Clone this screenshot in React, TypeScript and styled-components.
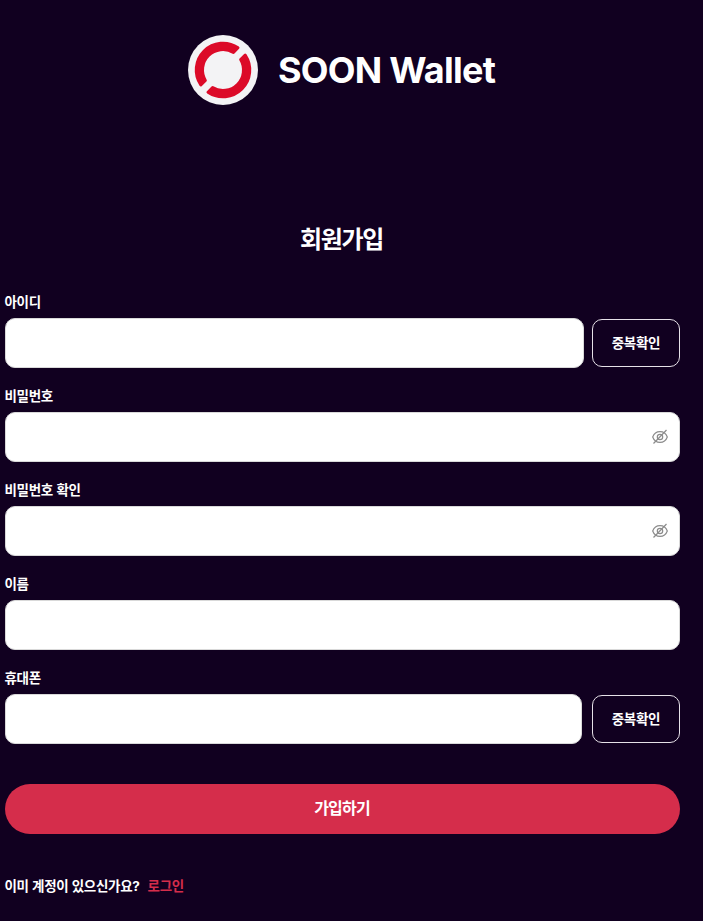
import React from "react";
import styled, { createGlobalStyle } from "styled-components";

const Global = createGlobalStyle`
  * { box-sizing: border-box; }
  body {
    margin: 0;
    background: #110020;
    color: #fff;
    font-family: Inter, "Noto Sans CJK KR", sans-serif;
  }
`;

const Page = styled.main`
  width: 675px;
  min-height: 921px;
  margin-left: 5px;
  padding-top: 35px;
`;

const Brand = styled.header`
  display: flex;
  align-items: center;
  gap: 20px;
  height: 70px;
  padding-left: 183px;
`;

const BrandName = styled.span`
  font-size: 36px;
  font-weight: 700;
  line-height: 70px;
  letter-spacing: -0.75px;
  white-space: nowrap;
`;

const Title = styled.h1`
  margin: 115px 0 0;
  padding-right: 2px;
  height: 40px;
  line-height: 40px;
  font-size: 24px;
  font-weight: 700;
  letter-spacing: -1.3px;
  text-align: center;
`;

const Form = styled.form`
  display: flex;
  flex-direction: column;
  gap: 18px;
  margin-top: 32px;
`;

const Label = styled.label`
  display: block;
  height: 26px;
  margin-left: -0.5px;
  line-height: 20px;
  font-size: 13.5px;
  font-weight: 700;
  letter-spacing: -0.3px;
  word-spacing: 0.5px;
`;

const Field = styled.div`
  display: flex;
  flex-direction: column;
`;

const Row = styled.div<{ $gap?: number }>`
  display: flex;
  align-items: center;
  gap: ${(p) => p.$gap ?? 0}px;
`;

const InputBox = styled.div`
  flex: 1;
  display: flex;
  align-items: center;
  height: 50px;
  padding-right: 11px;
  background: #fff;
  border: 1px solid #d9d9d9;
  border-radius: 10px;
`;

const Input = styled.input`
  flex: 1;
  min-width: 0;
  height: 100%;
  padding: 0 11px;
  border: 0;
  outline: 0;
  background: transparent;
  font: inherit;
`;

const CheckButton = styled.button`
  width: 88px;
  height: 48px;
  padding: 0 0 3px;
  border: 1px solid #e6e1e8;
  border-radius: 10px;
  background: transparent;
  color: #fff;
  font: 700 13.5px Inter, "Noto Sans CJK KR", sans-serif;
  letter-spacing: -0.3px;
`;

const Submit = styled.button`
  height: 50px;
  margin-top: 22px;
  padding: 0 1px 5px 0;
  border: 0;
  border-radius: 25px;
  background: #d52d4b;
  color: #fff;
  font: 700 16px Inter, "Noto Sans CJK KR", sans-serif;
  letter-spacing: -0.8px;
`;

const Footer = styled.p`
  display: flex;
  gap: 8px;
  margin: 42px 0 0 -0.5px;
  font-size: 13.5px;
  font-weight: 700;
  line-height: 20px;
  letter-spacing: -0.3px;
  word-spacing: 0.4px;
`;

const LoginLink = styled.a`
  color: #d52d4b;
`;

const Logo = () => (
  <svg width="70" height="70" viewBox="-35 -35 70 70">
    <circle r="35" fill="#f3f3f5" />
    <g transform="rotate(-45)" fill="#dc0a28" stroke="#dc0a28" strokeWidth="3" strokeLinejoin="round">
      <path d="M26.3 5.100A26.800 26.800 0 0 1-26.300 5.100L-19.850 5.100A20.500 20.500 0 0 0 19.850 5.100Z" />
      <path d="M26.300-5.100A26.800 26.800 0 0 0-26.300-5.100L-19.850-5.100A20.500 20.500 0 0 1 19.850-5.100Z" />
    </g>
  </svg>
);

const EyeOff = () => (
  <svg width="16" height="16" viewBox="0 0 16 16" fill="none" stroke="#8c8c8c" strokeWidth="1.2">
    <path d="M.7 8C2 4.400 4.800 2.600 8 2.600S14 4.400 15.300 8C14 11.600 11.200 13.400 8 13.400S2 11.600.7 8Z" />
    <circle cx="8" cy="8" r="2.700" />
    <path d="M1.500 14.500L14.500 1" />
  </svg>
);

type FieldSpec = { id: string; label: string; secret?: boolean; gap?: number };

const fields: FieldSpec[] = [
  { id: "userId", label: "아이디", gap: 8 },
  { id: "password", label: "비밀번호", secret: true },
  { id: "confirm", label: "비밀번호 확인", secret: true },
  { id: "name", label: "이름" },
  { id: "phone", label: "휴대폰", gap: 10 },
];

export default function App() {
  return (
    <>
      <Global />
      <Page>
        <Brand>
          <Logo />
          <BrandName>SOON Wallet</BrandName>
        </Brand>
        <Title>회원가입</Title>
        <Form>
          {fields.map((f) => (
            <Field key={f.id}>
              <Label htmlFor={f.id}>{f.label}</Label>
              <Row $gap={f.gap}>
                <InputBox>
                  <Input id={f.id} type={f.secret ? "password" : "text"} />
                  {f.secret && <EyeOff />}
                </InputBox>
                {f.gap && <CheckButton type="button">중복확인</CheckButton>}
              </Row>
            </Field>
          ))}
          <Submit type="button">가입하기</Submit>
        </Form>
        <Footer>
          이미 계정이 있으신가요? <LoginLink>로그인</LoginLink>
        </Footer>
      </Page>
    </>
  );
}
